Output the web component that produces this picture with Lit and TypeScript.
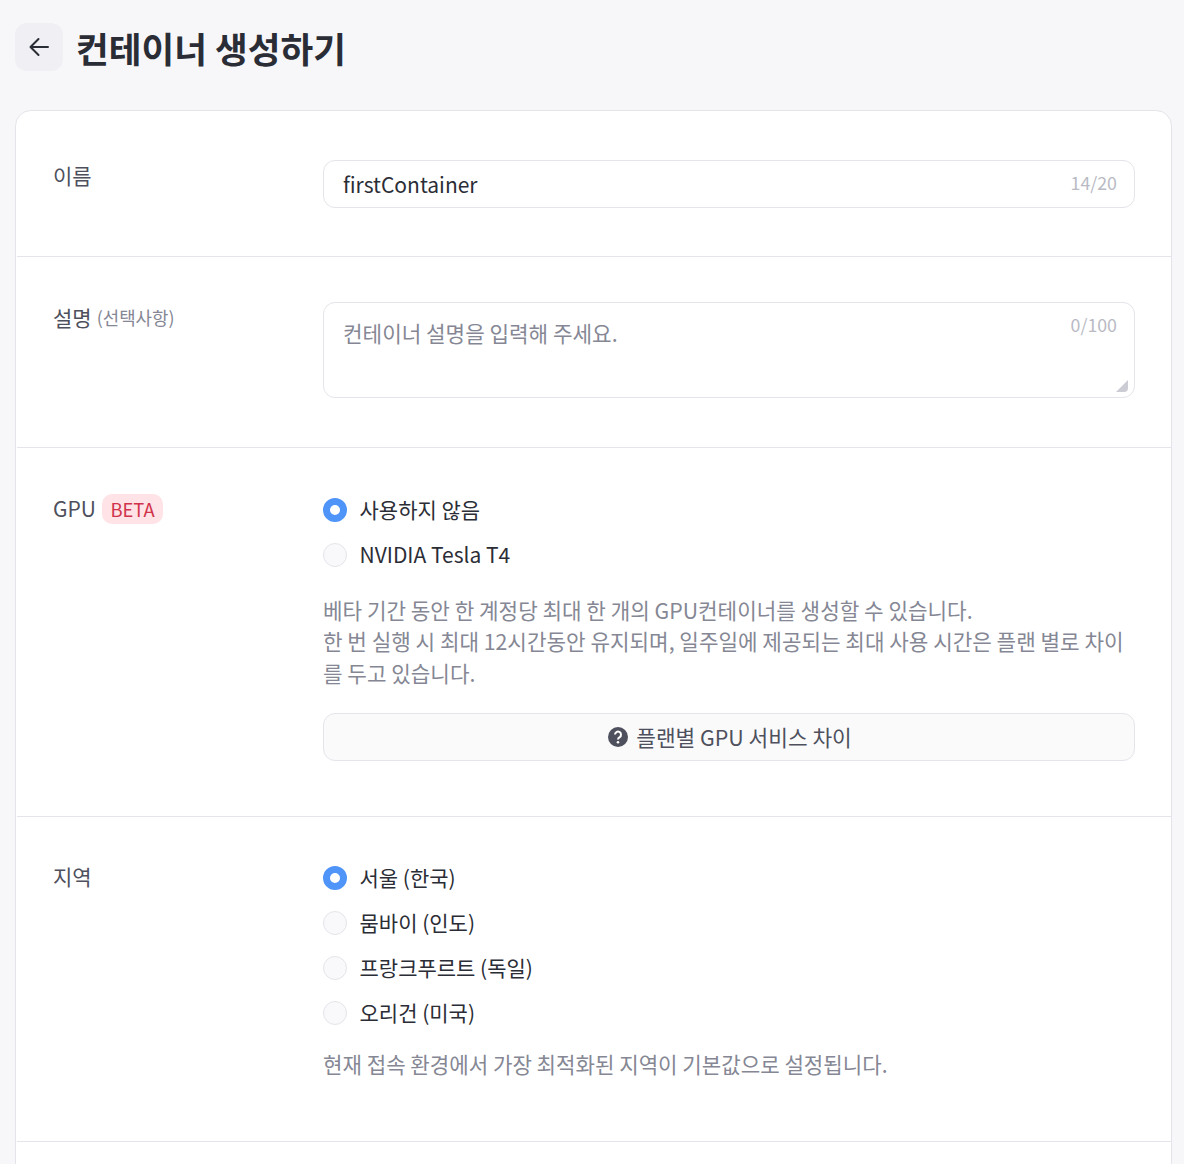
import { LitElement, html, css } from "lit";
import { customElement } from "lit/decorators.js";

@customElement("app-root")
export class AppRoot extends LitElement {
  static styles = css`
    :host {
      display: block;
      height: 1164px;
      overflow: hidden;
      box-sizing: border-box;
      background: #f7f7fa;
      padding: 23px 12px 0 15px;
      font-family: "Noto Sans CJK KR", "Noto Sans", sans-serif;
      color: #2b2d36;
    }
    * { box-sizing: border-box; }
    .head { display: flex; align-items: center; gap: 13px; height: 48px; margin-bottom: 39px; }
    .back {
      width: 48px; height: 48px; border: 0; padding: 0; border-radius: 12px;
      background: #f0f0f4; display: flex; align-items: center; justify-content: center; color: #2b2d36;
    }
    h1 { margin: 0; padding-top: 2px; font-size: 35.6px; line-height: 48px; font-weight: 700; color: #2b2d36; }
    .card { background: #fff; border: 1px solid #e4e4ea; border-radius: 16px; }
    .row {
      display: grid; grid-template-columns: 270px 812px; align-items: start;
      margin-left: 1px; padding-left: 36px; border-bottom: 1px solid #e4e4ea;
    }
    .r1 { padding-top: 49px; padding-bottom: 48px; }
    .r2 { padding-top: 45px; padding-bottom: 49px; }
    .r3 { padding-top: 44px; padding-bottom: 55px; }
    .r4 { padding-top: 44px; padding-bottom: 61px; }
    .label { display: flex; align-items: center; gap: 5px; height: 30px; font-size: 21px; color: #4e505d; }
    .r3 .label { height: 32px; gap: 6px; }
    .label small { font-size: 17.9px; color: #858794; }
    .badge {
      font-size: 18.4px; line-height: 30px; height: 30px; margin-top: 2px;
      padding: 0 8px 0 8.500px; border-radius: 10px;
      background: #ffe3e6; color: #d0334b;
    }
    .field {
      display: flex; align-items: center; height: 48px; border: 1px solid #e4e4ea; border-radius: 12px;
      padding: 0 17px 0 19px; background: #fff;
    }
    input {
      flex: 1; min-width: 0; border: 0; outline: 0; padding: 0 0 1px; background: transparent;
      font: inherit; font-size: 21px; color: #2b2d36;
    }
    .count { font-size: 17.8px; color: #b9bac4; padding-bottom: 4px; }
    .area {
      position: relative; display: flex; align-items: flex-start; height: 96px;
      border: 1px solid #e4e4ea; border-radius: 12px; padding: 14px 17px 0 19px;
    }
    .ph { flex: 1; font-size: 21.28px; line-height: 32px; color: #858794; }
    .area .count { line-height: 20px; margin-top: -3px; padding-bottom: 0; }
    .grip { position: absolute; right: 6px; bottom: 5px; width: 12px; height: 12px; display: block; }
    .options { display: flex; flex-direction: column; gap: 13px; }
    .r3 .options { margin-top: 2px; }
    .r4 .options { margin-top: 1px; }
    .opt { display: flex; align-items: center; gap: 12.500px; height: 32px; font-size: 21px; color: #2b2d36; }
    .opt .t { padding-bottom: 2px; }
    .radio { width: 24px; height: 24px; border-radius: 50%; border: 1px solid #e4e4ea; background: #f9f9fb; flex: none; }
    .radio.on { border: 7px solid #4f94f9; background: #fff; }
    .help { margin: 0; font-size: 21.280px; line-height: 31.5px; color: #858794; }
    .r3 .help { margin-top: 22.5px; }
    .r4 .help { margin-top: 19px; font-size: 21.17px; }
    .btn {
      display: flex; align-items: center; justify-content: center; gap: 8px; width: 100%; height: 48px;
      margin-top: 25px; border: 1px solid #e4e4ea; border-radius: 12px; background: #fafafb;
      padding: 0 0 0 2px; font: inherit; font-size: 21.4px; color: #4e505d;
    }
    .btn .t { padding-bottom: 2px; }
    .spacer { height: 200px; }
  `;

  private opt(text: string, on = false) {
    return html`<div class="opt"><span class="radio ${on ? "on" : ""}"></span><span class="t">${text}</span></div>`;
  }

  render() {
    return html`
      <div class="head">
        <button class="back" aria-label="뒤로">
          <svg width="24" height="24" viewBox="0 0 24 24" fill="none" stroke="currentColor" stroke-width="2" stroke-linecap="round" stroke-linejoin="round">
            <path d="M21 12H3.500M11.500 4 3.500 12l8 8" />
          </svg>
        </button>
        <h1>컨테이너 생성하기</h1>
      </div>
      <div class="card">
        <div class="row r1">
          <div class="label">이름</div>
          <div class="field"><input value="firstContainer" /><span class="count">14/20</span></div>
        </div>
        <div class="row r2">
          <div class="label">설명 <small>(선택사항)</small></div>
          <div class="area">
            <span class="ph">컨테이너 설명을 입력해 주세요.</span><span class="count">0/100</span>
            <svg class="grip" viewBox="0 0 12 12"><path d="M12 0V8a4 4 0 0 1-4 4H0Z" fill="#ccccd4" /></svg>
          </div>
        </div>
        <div class="row r3">
          <div class="label">GPU <span class="badge">BETA</span></div>
          <div>
            <div class="options">
              ${this.opt("사용하지 않음", true)}
              ${this.opt("NVIDIA Tesla T4")}
            </div>
            <p class="help">베타 기간 동안 한 계정당 최대 한 개의 GPU컨테이너를 생성할 수 있습니다.<br />한 번 실행 시 최대 12시간동안 유지되며, 일주일에 제공되는 최대 사용 시간은 플랜 별로 차이를 두고 있습니다.</p>
            <button class="btn">
              <svg width="20" height="20" viewBox="0 0 20 20"><circle cx="10" cy="10" r="10" fill="#4e505d" /><path d="M7 7.600a3 3 0 1 1 4.700 2.500c-1.100.7-1.700 1.200-1.700 2.400" fill="none" stroke="#fff" stroke-width="2" /><circle cx="10" cy="15.300" r="1.300" fill="#fff" /></svg>
              <span class="t">플랜별 GPU 서비스 차이</span>
            </button>
          </div>
        </div>
        <div class="row r4">
          <div class="label">지역</div>
          <div>
            <div class="options">
              ${this.opt("서울 (한국)", true)}
              ${this.opt("뭄바이 (인도)")}
              ${this.opt("프랑크푸르트 (독일)")}
              ${this.opt("오리건 (미국)")}
            </div>
            <p class="help">현재 접속 환경에서 가장 최적화된 지역이 기본값으로 설정됩니다.</p>
          </div>
        </div>
        <div class="spacer"></div>
      </div>
    `;
  }
}
